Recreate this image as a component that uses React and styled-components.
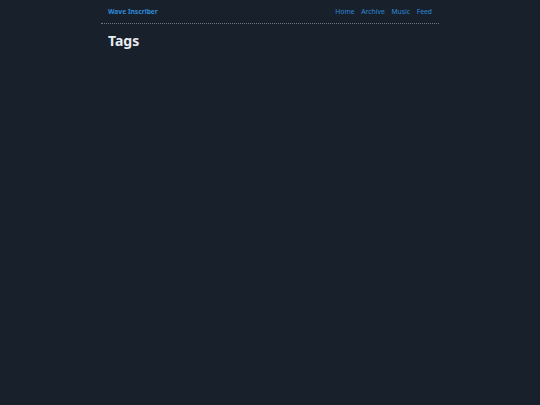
import React from 'react'
import styled, { createGlobalStyle } from 'styled-components'

const GlobalStyle = createGlobalStyle`
  html, body {
    margin: 0;
    padding: 0;
    background: #18202c;
    min-height: 100%;
  }
  body {
    font-family: "Noto Sans", "Open Sans", sans-serif;
    color: #e6e9ee;
  }
`

const Page = styled.div`
  width: 338px;
  margin: 0 auto;
`

const Header = styled.header`
  display: flex;
  align-items: center;
  justify-content: space-between;
  height: 23px;
  padding: 0 7px;
  border-bottom: 1px dotted #6f7782;
`

const Brand = styled.a`
  font-size: 6.7px;
  font-weight: 700;
  color: #2e8ad8;
  text-decoration: none;
`

const Nav = styled.nav`
  display: flex;
  gap: 6.6px;
`

const NavLink = styled.a`
  font-size: 6.8px;
  color: #2e8ad8;
  text-decoration: none;
`

const Title = styled.h1`
  margin: 7px 7px 0;
  font-size: 14px;
  font-weight: 700;
  color: #e8ebef;
`

export default function App() {
  return (
    <>
      <GlobalStyle />
      <Page>
        <Header>
          <Brand href="#">Wave Inscriber</Brand>
          <Nav>
            {['Home', 'Archive', 'Music', 'Feed'].map(item => (
              <NavLink key={item} href="#">{item}</NavLink>
            ))}
          </Nav>
        </Header>
        <Title>Tags</Title>
      </Page>
    </>
  )
}
